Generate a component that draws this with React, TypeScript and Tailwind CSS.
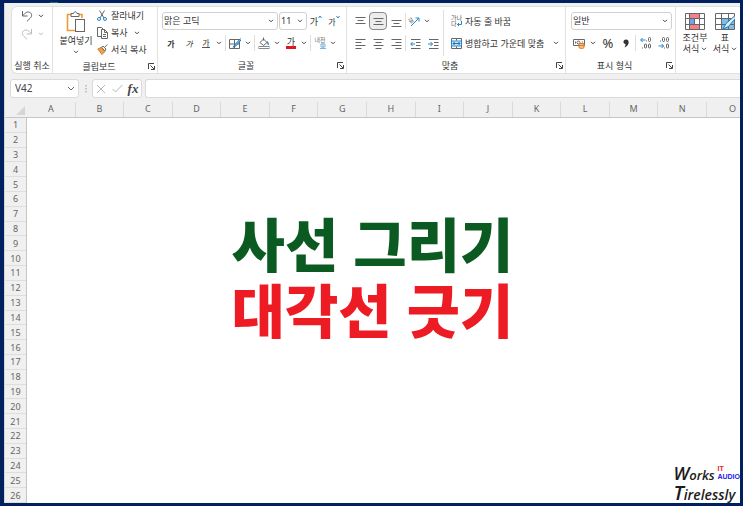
import type { ReactNode } from "react";

const columns = ["A", "B", "C", "D", "E", "F", "G", "H", "I", "J", "K", "L", "M", "N"];
const rows = Array.from({ length: 26 }, (_, i) => i + 1);

function Icon({ w, h, children }: { w: number; h: number; children: ReactNode }) {
  return (
    <svg width={w} height={h} viewBox={`0 0 ${w} ${h}`} fill="none" stroke="#666" strokeWidth="1" className="shrink-0" aria-hidden="true">
      {children}
    </svg>
  );
}

function Chevron({ light }: { light?: boolean }) {
  return (
    <Icon w={6} h={4}>
      <path d="M1 .8 3 2.8 5 .8" stroke={light ? "#bbb" : "#444"} />
    </Icon>
  );
}

function Tool({ label, children, className = "w-4" }: { label: string; children: ReactNode; className?: string }) {
  return (
    <button type="button" aria-label={label} className={`flex h-[18px] shrink-0 items-center justify-center ${className}`}>
      {children}
    </button>
  );
}

function Drop({ label, light }: { label: string; light?: boolean }) {
  return (
    <Tool label={label} className="w-[10px]">
      <Chevron light={light} />
    </Tool>
  );
}

function Divider() {
  return <span className="mx-px h-4 w-px shrink-0 bg-[#dedede]" />;
}

function Group({ title, launcher = true, className, children }: { title: string; launcher?: boolean; className: string; children: ReactNode }) {
  return (
    <section aria-label={title} className={`flex shrink-0 flex-col border-r border-[#e2e2e2] ${className}`}>
      <div className="flex h-[51px] px-1">{children}</div>
      <div className="flex h-4 items-center">
        <h2 className="flex-1 text-center whitespace-nowrap">{title}</h2>
        {launcher && (
          <Tool label={`${title} 설정`} className="w-3">
            <Icon w={7} h={7}>
              <path d="M.5 6V.5H6M2.5 2.5l3.5 3.5M6.5 3v3.5H3" stroke="#444" />
            </Icon>
          </Tool>
        )}
      </div>
    </section>
  );
}

function Combo({ label, value, className }: { label: string; value: string; className: string }) {
  return (
    <label className={`relative flex h-[18px] items-center ${className}`}>
      <span className="sr-only">{label}</span>
      <select defaultValue={value} className="h-full w-full appearance-none rounded-[3px] border border-[#d0d0d0] bg-white py-0 pl-px leading-[16px]">
        <option>{value}</option>
      </select>
      <span className="pointer-events-none absolute right-1">
        <Chevron />
      </span>
    </label>
  );
}

function Lines({ d }: { d: string }) {
  return (
    <Icon w={11} h={11}>
      <path d={d} />
    </Icon>
  );
}

function Indent({ label, out }: { label: string; out?: boolean }) {
  return (
    <Tool label={label} className="w-[18px]">
      <Icon w={11} h={11}>
        <path d="M1 1.500h9.500M6 4.500h4.500M6 7.500h4.500M1 10.500h9.500" />
        <path d={out ? "M5 6H.8M2.600 4 .7 6l1.900 2" : "M0 6h4.500M2.600 4l1.900 2-1.900 2"} stroke="#2487cf" />
      </Icon>
    </Tool>
  );
}

function Decimal({ label, increase }: { label: string; increase?: boolean }) {
  return (
    <Tool label={label} className="w-[18px]">
      <Icon w={12} h={12}>
        <rect x="8.500" y=".5" width="2" height="4" rx="1" />
        {increase ? (
          <>
            <path d="M5.500 3H.8M2.600 1 .7 3l1.900 2" stroke="#2487cf" />
            <rect x="4.500" y="7" width="2" height="4" rx="1" />
            <rect x="8.500" y="7" width="2" height="4" rx="1" />
            <path d="M2.500 10.500v1M6.500 3.500v1" />
          </>
        ) : (
          <>
            <rect x="4.500" y=".5" width="2" height="4" rx="1" />
            <path d="M.5 9h5M3.600 7l2 2-2 2" stroke="#2487cf" />
            <rect x="8.500" y="7" width="2" height="4" rx="1" />
            <path d="M2.500 3.500v1M6.500 10.500v1" />
          </>
        )}
      </Icon>
    </Tool>
  );
}

function Ribbon() {
  return (
    <div className="ml-[6px] mt-[3px] flex h-[68px] shrink-0 overflow-hidden rounded-l-md border border-r-0 border-[#e0e0e0] bg-white text-[9px] leading-[11px] text-[#333]">
      <Group title="실행 취소" launcher={false} className="w-[41px]">
        <div className="flex flex-col pl-[2px]">
          <div className="flex">
            <Tool label="실행 취소" className="w-[18px]">
              <Icon w={12} h={12}>
                <path d="M1.500 1v5h5M1.700 5.700C4 2.700 6.500 1.200 8.800 2.400c2.500 1.400 2.200 4 .5 5.700L6 11.300" />
              </Icon>
            </Tool>
            <Drop label="실행 취소 목록" />
          </div>
          <div className="flex">
            <Tool label="다시 실행" className="w-[18px]">
              <Icon w={12} h={12}>
                <path d="M10.500 1v5h-5M10.300 5.700C8 2.700 5.500 1.200 3.200 2.400c-2.500 1.400-2.200 4-.5 5.700L6 11.300" stroke="#bbb" />
              </Icon>
            </Tool>
            <Drop label="다시 실행 목록" light />
          </div>
        </div>
      </Group>

      <Group title="클립보드" className="w-[105px]">
        <button type="button" className="flex w-[38px] shrink-0 flex-col items-center pt-1 whitespace-nowrap">
          <Icon w={20} h={22}>
            <path d="M5 3.500H1.500v16H9M13 3.500h3V7" stroke="#eb9d34" strokeWidth="1.600" />
            <path d="M5 5.500v-3h2.500C8 .2 10.500.2 11 2.500h2v3z" fill="#fff" />
            <rect x="9.500" y="8.500" width="9" height="12" fill="#fff" />
          </Icon>
          <span className="mt-0.5">붙여넣기</span>
          <span className="mt-1"><Chevron /></span>
        </button>
        <div className="ml-[2px] flex flex-col whitespace-nowrap">
          <button type="button" className="flex h-[18px] items-center gap-1">
            <Icon w={10} h={11}>
              <path d="M2.500.5 7 8M7.500.5 3 8" />
              <circle cx="2" cy="9" r="1.500" stroke="#2487cf" />
              <circle cx="8" cy="9" r="1.500" stroke="#2487cf" />
            </Icon>
            잘라내기
          </button>
          <div className="flex">
            <button type="button" className="flex h-[18px] items-center gap-[3px]">
              <Icon w={11} h={12}>
                <path d="M4 9.500H.5v-9h4L6 2M4.500 2.500h3l3 3v6h-6zM7.500 2.500v3h3M6 7.500h3M6 9.500h3" />
              </Icon>
              복사
            </button>
            <span className="ml-1 flex"><Drop label="복사 옵션" /></span>
          </div>
          <button type="button" className="flex h-[17px] items-center gap-[3px]">
            <Icon w={11} h={11}>
              <path d="M.8 5 4 3.500l4 4L5 10.500z" fill="#f0a04a" stroke="#d97c1f" />
              <path d="m4.500 3.200 1.500-1L9 5 7.800 7zM7.500 3.500l2.800-3" fill="#fff" />
            </Icon>
            서식 복사
          </button>
        </div>
      </Group>

      <Group title="글꼴" className="w-[189px]">
        <div className="flex flex-col gap-1 pt-[5px]">
          <div className="flex items-center gap-px">
            <Combo label="글꼴" value="맑은 고딕" className="w-[116px]" />
            <Combo label="글꼴 크기" value="11" className="w-7" />
            <Tool label="글꼴 크기 크게" className="w-4">
              <span>가</span>
              <span className="mb-2"><Icon w={4} h={4}><path d="M.5 3 2 1l1.500 2" stroke="#2487cf" /></Icon></span>
            </Tool>
            <Tool label="글꼴 크기 작게" className="w-[18px]">
              <span className="text-[8px]">가</span>
              <span className="mb-2"><Icon w={4} h={4}><path d="M.5 1 2 3l1.500-2" stroke="#2487cf" /></Icon></span>
            </Tool>
          </div>
          <div className="flex items-center">
            <Tool label="굵게" className="w-[18px]"><b className="text-[8px]">가</b></Tool>
            <Tool label="기울임꼴" className="w-[18px]"><i className="text-[8px]">가</i></Tool>
            <Tool label="밑줄"><span className="border-b border-[#555] text-[8px] leading-[9px]">가</span></Tool>
            <Drop label="밑줄 옵션" />
            <Divider />
            <Tool label="테두리">
              <Icon w={12} h={11}>
                <path d="M.5 1.500h10v9H.5zM.5 6h10M5.500 1.500v9" />
                <path d="M11.500.5 6.500 6 4 9.200l3.200-1.500L12 2" fill="#8cc4ec" stroke="#2478b8" />
              </Icon>
            </Tool>
            <Drop label="테두리 옵션" />
            <Divider />
            <Tool label="채우기 색">
              <Icon w={12} h={12}>
                <path d="M5.500.5v3M2 5.500 5.500 2 9 5.500 5.500 8.500z" />
                <path d="M9 4.500c1 1 1.500 2 1.200 3.500" stroke="#2487cf" strokeWidth="1.400" />
                <rect x="1" y="9.500" width="10" height="2" fill="#fff" stroke="#888" />
              </Icon>
            </Tool>
            <Drop label="채우기 색 옵션" />
            <Tool label="글꼴 색" className="ml-px w-4">
              <span className="border-b-[3px] border-[#e3141b] px-px text-[9px] leading-[9px]">가</span>
            </Tool>
            <Drop label="글꼴 색 옵션" />
            <Divider />
            <Tool label="윗주 필드">
              <span className="flex flex-col items-end text-[6px] leading-[6px] whitespace-nowrap text-[#777]">
                내천
                <Icon w={6} h={6}><path d="M1 1h4v3H1zM3 0v6M0 5.500h6" stroke="#78b4df" /></Icon>
              </span>
            </Tool>
            <Drop label="윗주 옵션" />
          </div>
        </div>
      </Group>

      <Group title="맞춤" className="w-[219px]">
        <div className="flex flex-col gap-1 pt-[5px]">
          <div className="flex items-center">
            <Tool label="위쪽 맞춤" className="w-[18px]"><Lines d="M.5 1.500h10M2.500 4.500h6M.5 7.500h10" /></Tool>
            <Tool label="가운데 맞춤" className="w-[18px] rounded-[4px] border border-[#888] bg-[#ececec]"><Lines d="M.5 2.500h10M2.500 5.500h6M.5 8.500h10" /></Tool>
            <Tool label="아래쪽 맞춤" className="w-[18px]"><Lines d="M.5 4.500h10M2.500 7.500h6M.5 10.500h10" /></Tool>
            <span className="h-4 w-px bg-[#dedede]" />
            <Tool label="방향" className="w-4">
              <Icon w={12} h={12}>
                <text x="0" y="7" fontSize="6" fill="#666" stroke="none" transform="rotate(-40 4 5)">갈</text>
                <path d="M3 11 10.500 3.500M7.500 3h3.500v3.500" stroke="#2487cf" />
              </Icon>
            </Tool>
            <Drop label="방향 옵션" />
          </div>
          <div className="flex items-center">
            <Tool label="왼쪽 맞춤" className="w-[18px]"><Lines d="M.5 1.500h10M.5 4.500h6M.5 7.500h10M.5 10.500h6" /></Tool>
            <Tool label="가로 가운데 맞춤" className="w-[18px]"><Lines d="M.5 1.500h10M2.500 4.500h6M.5 7.500h10M2.500 10.500h6" /></Tool>
            <Tool label="오른쪽 맞춤" className="w-[18px]"><Lines d="M.5 1.500h10M4.500 4.500h6M.5 7.500h10M4.500 10.500h6" /></Tool>
            <span className="h-4 w-px bg-[#dedede]" />
            <Indent label="내어쓰기" out />
            <Indent label="들여쓰기" />
          </div>
        </div>
        <span className="mt-[3px] ml-px h-[46px] w-px shrink-0 bg-[#dedede]" />
        <div className="flex flex-1 flex-col gap-1 pt-[5px] pl-[7px] whitespace-nowrap">
          <button type="button" className="flex h-[18px] items-center gap-[3px]">
            <Icon w={11} h={12}>
              <text x="0" y="5" fontSize="6" fill="#555" stroke="none">가나</text>
              <text x="0" y="11" fontSize="6" fill="#555" stroke="none">다</text>
              <path d="M10.500 6v3.500H6.500M8 8 6.500 9.500 8 11" stroke="#2487cf" />
            </Icon>
            자동 줄 바꿈
          </button>
          <div className="flex items-center justify-between">
            <button type="button" className="flex h-[18px] items-center gap-[3px]">
              <Icon w={11} h={11}>
                <path d="M.5.5h10v10H.5zM5.500.5v2M5.500 8.500v2" />
                <path d="M.5 3h10v5H.5z" fill="#cfe6f8" stroke="#2487cf" />
                <path d="M2 5.500h7M3.500 4 2 5.500 3.500 7M7.500 4 9 5.500 7.500 7" stroke="#1970b5" />
              </Icon>
              병합하고 가운데 맞춤
            </button>
            <Drop label="병합 옵션" />
          </div>
        </div>
      </Group>

      <Group title="표시 형식" className="w-[110px]">
        <div className="flex flex-1 flex-col gap-1 pt-[5px]">
          <Combo label="표시 형식" value="일반" className="mx-px" />
          <div className="flex items-center">
            <Tool label="회계 표시 형식" className="w-[18px]">
              <Icon w={13} h={11}>
                <path d="M.5 1.500h11v6H.5zM2.500 3.500v2M9.500 3.500v1" />
                <circle cx="5.500" cy="4.500" r="1.500" />
                <path d="M6 5.500h5v4.200c-1 1-4 1-5 0zM6 7.500h5" fill="#f7c28b" stroke="#dd7b20" />
              </Icon>
            </Tool>
            <Drop label="회계 옵션" />
            <Tool label="백분율 스타일" className="w-5"><span className="text-[13px]">%</span></Tool>
            <Tool label="쉼표 스타일">
              <Icon w={6} h={9}>
                <path d="M3 .5c4 0 3.500 6-1.500 8 .8-1.500 1.200-2.500 1-3.500C-.5 5 0 .5 3 .5z" fill="#333" stroke="none" />
              </Icon>
            </Tool>
            <Divider />
            <Decimal label="자릿수 늘림" increase />
            <Decimal label="자릿수 줄임" />
          </div>
        </div>
      </Group>

      <div className="flex min-w-0 flex-1 overflow-hidden pt-[6px] pl-[3px] whitespace-nowrap">
        <button type="button" className="flex w-8 shrink-0 flex-col items-center">
          <Icon w={20} h={17}>
            <path d="M4.500.5h10v5h-10zM4.500 11.500h10v5h-10z" fill="#f58089" stroke="none" />
            <path d="M4.500 6h5v5h-5z" fill="#68a8e4" stroke="none" />
            <path d="M.5.5h19v16H.5zM.5 5.500h19M.5 11.500h19M4.500.5v16M9.500 5.500v6M14.500.5v16" />
          </Icon>
          <span className="mt-0.5">조건부</span>
          <span className="flex items-center gap-0.5">서식 <Chevron /></span>
        </button>
        <button type="button" className="flex w-7 shrink-0 flex-col items-center">
          <Icon w={20} h={17}>
            <path d="M6.500 5.500h13v11h-13z" fill="#7dbcec" stroke="none" />
            <path d="M.5.5h19v16H.5zM.5 5.500h19M.5 11.500h19M6.500.5v16M13.500.5v16" />
            <path d="M19.500 3 11 10.500 8 16l5.500-2.500L20 6" fill="#d8edfb" stroke="#2478b8" />
          </Icon>
          <span className="mt-0.5">표</span>
          <span className="flex items-center gap-0.5">서식 <Chevron /></span>
        </button>
      </div>
    </div>
  );
}

function FormulaBar() {
  return (
    <div className="mt-[5px] ml-[5px] flex h-[19px] shrink-0 items-stretch">
      <div className="flex w-[69px] shrink-0 items-center rounded-[3px] border border-[#dadada] bg-white">
        <input aria-label="이름 상자" defaultValue="V42" className="w-full min-w-0 flex-1 bg-transparent pl-1 text-[10px] text-[#444] outline-none" />
        <Tool label="이름 목록" className="w-[14px]">
          <Icon w={8} h={5}><path d="M1 1l3 3 3-3" /></Icon>
        </Tool>
      </div>
      <span className="flex w-[13px] shrink-0 items-center justify-center">
        <Icon w={2} h={8}><path d="M1 0v8" strokeDasharray="1.500 1.500" stroke="#999" /></Icon>
      </span>
      <div className="flex w-[50px] shrink-0 items-center rounded-[3px] border border-[#dadada] bg-white">
        <Tool label="취소">
          <Icon w={10} h={10}><path d="m1 1 8 8M9 1 1 9" stroke="#b5b5b5" /></Icon>
        </Tool>
        <Tool label="입력">
          <Icon w={11} h={9}><path d="m.5 5 3 3L10.500.8" stroke="#b5b5b5" /></Icon>
        </Tool>
        <Tool label="함수 삽입">
          <i className="font-['Liberation_Serif',serif] text-[13px] font-bold text-[#444]">fx</i>
        </Tool>
      </div>
      <input aria-label="수식 입력줄" className="ml-[3px] min-w-0 flex-1 rounded-l-[3px] border border-r-0 border-[#dadada] bg-white px-1 text-[10px] outline-none" />
    </div>
  );
}

function Sheet() {
  return (
    <div className="flex min-h-0 flex-1 flex-col text-[9px] leading-none text-[#666]">
      <div className="flex h-5 shrink-0 border-b border-[#c6c6c6]">
        <div className="flex w-[22px] shrink-0 items-end justify-end p-0.5">
          <Icon w={9} h={9}><path d="M9 0v9H0z" fill="#d6d6d6" stroke="none" /></Icon>
        </div>
        <div className="grid flex-1 grid-cols-[repeat(14,minmax(0,1fr))_33px] overflow-hidden pt-1">
          {columns.map((c) => (
            <div key={c} className="flex items-center justify-center border-r border-[#dadada] pb-[3px]">{c}</div>
          ))}
          <div className="flex items-center justify-end pr-1 pb-[3px]">O</div>
        </div>
      </div>
      <div className="flex flex-1">
        <div className="grid w-[22px] shrink-0 auto-rows-fr border-r border-[#c6c6c6]">
          {rows.map((r) => (
            <div key={r} className="flex items-center justify-center border-b border-[#dedede]">{r}</div>
          ))}
        </div>
        <main className="relative flex flex-1 flex-col items-center bg-white pt-[94px]">
          <h1 className="pr-[22px] text-center text-[58px] leading-[66px] font-black whitespace-nowrap">
            <span className="block text-[#0b5a21]">사선 그리기</span>
            <span className="block text-[#ed1c24]">대각선 긋기</span>
          </h1>
          <div className="absolute right-0 bottom-0 flex flex-col font-['Open_Sans',sans-serif] text-[14px] leading-[17px] font-semibold text-[#1c1c1c]">
            <div className="flex items-start">
              <span className="flex w-[44px] items-baseline italic"><span className="text-[18px]">W</span><span className="text-[13px]">orks</span></span>
              <span className="flex flex-col font-['Liberation_Sans',sans-serif] text-[7px] leading-[8px] font-bold">
                <span className="text-[#f01818]">IT</span>
                <span className="text-[#2020f0]">AUDIO</span>
              </span>
            </div>
            <span className="flex items-baseline italic"><span className="text-[20px]">T</span><span>irelessly</span></span>
          </div>
        </main>
      </div>
    </div>
  );
}

export default function App() {
  return (
    <div className="flex h-screen flex-col bg-[#00205f] pr-[3px] pb-[3px] pl-[4px] font-['Noto_Sans','Noto_Sans_CJK_KR',sans-serif]">
      <div className="flex h-[3px] shrink-0 items-end pl-[46px]">
        <span className="h-px w-2 bg-[#16746c]" />
      </div>
      <div className="flex min-h-0 flex-1 flex-col overflow-hidden border-l border-[#d4d4d4] bg-[#f0f0f0]">
        <Ribbon />
        <FormulaBar />
        <Sheet />
      </div>
    </div>
  );
}
